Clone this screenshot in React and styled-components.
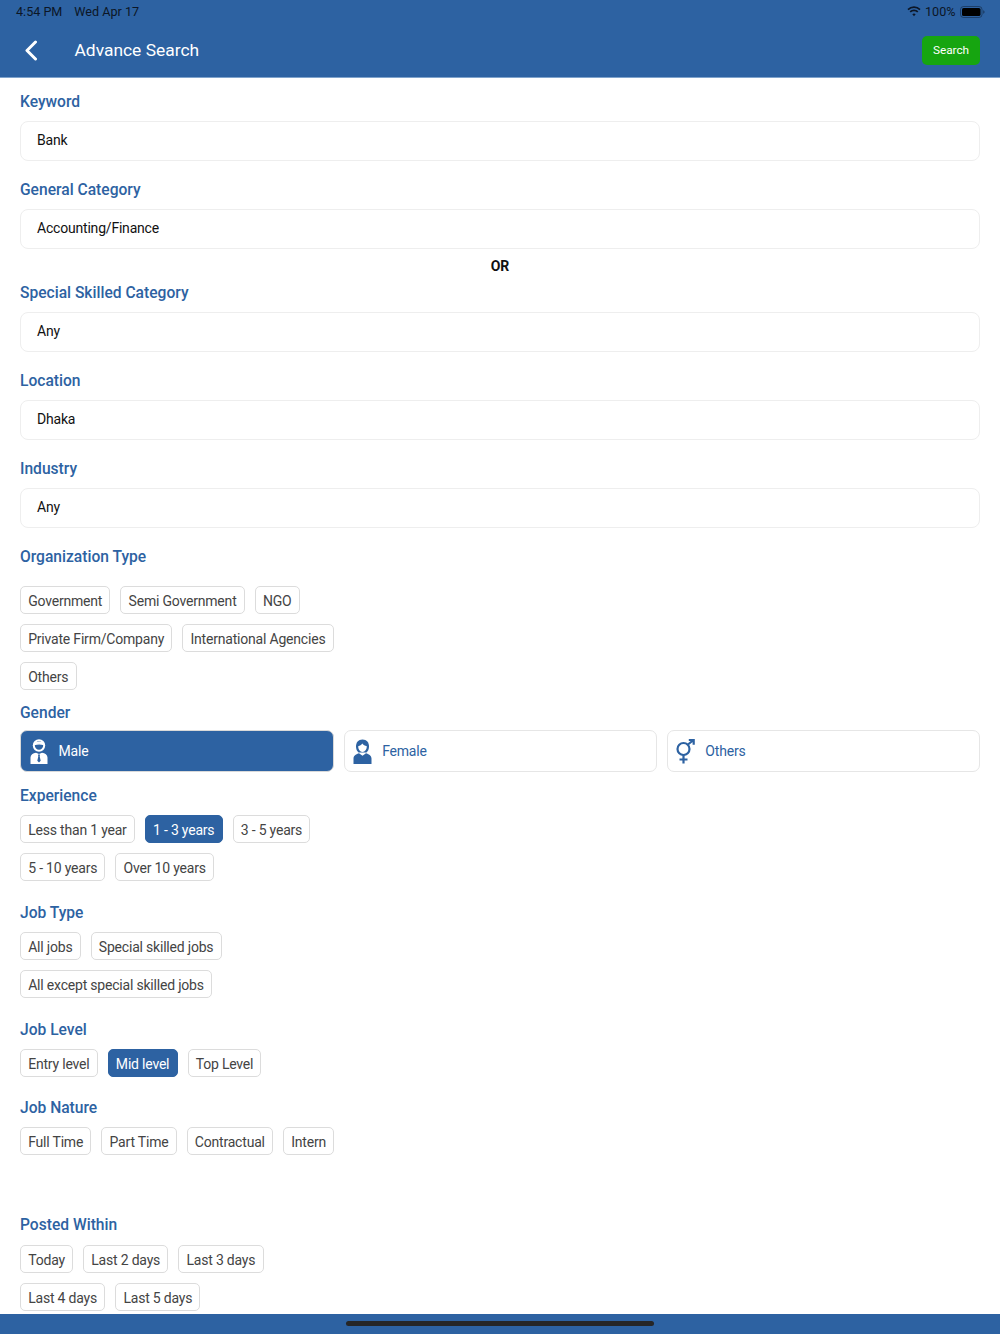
import React from "react";
import styled, { createGlobalStyle } from "styled-components";

const Blue = "#2d62a2";

const Global = createGlobalStyle`
  html, body { margin: 0; padding: 0; background: #fff; }
  body { font-family: Roboto, "Liberation Sans", sans-serif; }
  * { box-sizing: border-box; }
`;

const Page = styled.div`
  width: 1000px;
  height: 1334px;
  display: flex;
  flex-direction: column;
  overflow: hidden;
  background: #fff;
`;

const Header = styled.header`
  height: 78px;
  flex: none;
  background: ${Blue};
  border-bottom: 1px solid #7fa3cc;
  display: flex;
  flex-direction: column;
`;

const StatusBar = styled.div`
  height: 24px;
  padding: 0 15px 1px 16px;
  display: flex;
  align-items: center;
  justify-content: space-between;
  font-size: 12.6px;
  color: #0c1626;
`;

const StatusGroup = styled.div`
  display: flex;
  align-items: center;
  gap: ${(p) => p.$gap || 4.5}px;
`;

const NavBar = styled.div`
  flex: 1;
  padding: 0 20px 1px 25px;
  display: flex;
  align-items: center;
`;

const BackButton = styled.div`
  width: 49.5px;
  display: flex;
  align-items: center;
`;

const Title = styled.h1`
  flex: 1;
  margin: 0;
  font-size: 17.4px;
  font-weight: 400;
  color: #fff;
`;

const SearchButton = styled.button`
  width: 58px;
  height: 29px;
  border: 0;
  border-radius: 5px;
  background: #16a510;
  color: #fff;
  font: 400 11.8px Roboto, sans-serif;
  padding: 0;
`;

const Main = styled.main`
  flex: 1;
  min-height: 0;
  padding: 14px 20px 0;
  display: flex;
  flex-direction: column;
  & > * { flex: none; }
`;

const Label = styled.div`
  height: 20px;
  line-height: 21px;
  font-size: 15.6px;
  font-weight: 500;
  color: ${Blue};
  margin-top: ${(p) => p.$top || 0}px;
  margin-bottom: ${(p) => p.$bottom ?? 9}px;
`;

const Input = styled.div`
  height: 40px;
  padding: 0 16px 2px;
  display: flex;
  align-items: center;
  border: 1.5px solid #eeeeee;
  border-radius: 8px;
  font-size: 14px;
  letter-spacing: -0.2px;
  color: #111;
`;

const Or = styled.div`
  height: 20px;
  line-height: 20px;
  margin: 7px 0 7px;
  text-align: center;
  font-size: 14px;
  font-weight: 700;
  color: #111;
`;

const Chips = styled.div`
  max-width: 325px;
  display: flex;
  flex-wrap: wrap;
  gap: 10px;
`;

const Chip = styled.div`
  height: 28px;
  padding: 1px 7.2px 0;
  display: flex;
  align-items: center;
  border: 1px solid ${(p) => (p.$active ? Blue : "#dcdcdc")};
  border-radius: 5px;
  background: ${(p) => (p.$active ? Blue : "#fff")};
  color: ${(p) => (p.$active ? "#fff" : "#444")};
  font-size: 14px;
  letter-spacing: -0.2px;
  white-space: nowrap;
`;

const GenderRow = styled.div`
  display: flex;
  gap: 10px;
`;

const GenderButton = styled.div`
  flex: 1;
  height: 42px;
  padding-left: ${(p) => p.$pad}px;
  display: flex;
  align-items: center;
  gap: ${(p) => p.$gap}px;
  border: 1.5px solid ${(p) => (p.$active ? "#d9d9d9" : "#e6e6e6")};
  border-radius: 7px;
  background: ${(p) => (p.$active ? Blue : "#fff")};
  color: ${(p) => (p.$active ? "#fff" : Blue)};
  font-size: 14px;
  letter-spacing: -0.2px;
`;

const Footer = styled.footer`
  height: 20px;
  flex: none;
  background: ${Blue};
  display: flex;
  justify-content: center;
  padding-top: 7px;
`;

const HomeBar = styled.div`
  width: 308px;
  height: 5px;
  border-radius: 3px;
  background: #262626;
`;

const Wifi = () => (
  <svg width="14" height="11" viewBox="0 0 14 11" fill="none" stroke="#0c1626" strokeWidth="1.7">
    <path d="M1 3.6a8.6 8.6 0 0 1 12 0" />
    <path d="M3.2 5.9a5.4 5.4 0 0 1 7.6 0" />
    <path d="M7 10.2 5.3 8.2a2.5 2.5 0 0 1 3.4 0z" fill="#0c1626" stroke="none" />
  </svg>
);

const Battery = () => (
  <svg width="25" height="12" viewBox="0 0 25 12">
    <rect x="0.5" y="0.5" width="21.5" height="11" rx="3" fill="none" stroke="#0c1626" strokeOpacity="0.45" />
    <rect x="2" y="2" width="18.5" height="8" rx="1.6" fill="#000" />
    <path d="M23.3 4.2c.8.3 1.2 1 1.2 1.8s-.4 1.5-1.2 1.8z" fill="#0c1626" fillOpacity="0.6" />
  </svg>
);

const BackIcon = () => (
  <svg width="13" height="21" viewBox="0 0 13 21" fill="none" stroke="#fff" strokeWidth="3" strokeLinecap="round" strokeLinejoin="round">
    <path d="M10.5 2 2 10.5 10.5 19" />
  </svg>
);

const MaleIcon = ({ color, cut }) => (
  <svg width="18" height="25" viewBox="0 0 18 25">
    <circle cx="9" cy="6.5" r="5.2" fill="none" stroke={color} strokeWidth="2" />
    <path d="M4 5.6C6 2.6 12 2 14 5.6 11 4.6 7.5 4.6 4 5.6z" fill={color} stroke={color} strokeWidth="1.2" />
    <path d="M0.5 25v-6.5c0-2.6 2.4-4.2 5.5-4.7l3 1.2 3-1.2c3.1.5 5.5 2.1 5.5 4.7V25z" fill={color} />
    <path d="M8 15.4h2l-.3 2 1 4.3L9 23.6l-1.700-1.900 1-4.300z" fill={cut} />
  </svg>
);

const FemaleIcon = ({ color, cut }) => (
  <svg width="19" height="25" viewBox="0 0 19 25">
    <path d="M9.500 0.500c-4.300 0-6.500 3-6.500 6.800 0 2.700.9 4.900 2.500 6.200h8c1.600-1.300 2.500-3.500 2.500-6.200 0-3.800-2.200-6.800-6.500-6.800z" fill={color} />
    <path d="M5.200 7.300c1.800-.3 3.200-1.200 4.100-2.700 1 1.500 2.500 2.400 4.500 2.700 0 3-1.700 5.600-4.300 5.600S5.200 10.300 5.200 7.300z" fill={cut} />
    <path d="M0.500 25v-5.500c0-3 3-4.500 5.500-5.300l3.500 2.500 3.500-2.500c2.500.8 5.500 2.300 5.500 5.300V25z" fill={color} />
  </svg>
);

const OthersIcon = ({ color }) => (
  <svg width="19" height="25" viewBox="0 0 19 25" fill="none" stroke={color} strokeWidth="2.200">
    <circle cx="7.500" cy="10" r="6" />
    <path d="M7.500 16v8.500M3.500 20.500h8" />
    <path d="M12 5.500 17.500 1M12.800 1h4.900v4.700" />
  </svg>
);

const ChipGroup = ({ items, active }) => (
  <Chips>
    {items.map((t) => (
      <Chip key={t} $active={t === active}>{t}</Chip>
    ))}
  </Chips>
);

export default function App() {
  return (
    <Page>
      <Global />
      <Header>
        <StatusBar>
          <StatusGroup $gap={12}>
            <span>4:54 PM</span>
            <span>Wed Apr 17</span>
          </StatusGroup>
          <StatusGroup>
            <Wifi />
            <span>100%</span>
            <Battery />
          </StatusGroup>
        </StatusBar>
        <NavBar>
          <BackButton><BackIcon /></BackButton>
          <Title>Advance Search</Title>
          <SearchButton>Search</SearchButton>
        </NavBar>
      </Header>
      <Main>
        <Label>Keyword</Label>
        <Input>Bank</Input>
        <Label $top={19}>General Category</Label>
        <Input>Accounting/Finance</Input>
        <Or>OR</Or>
        <Label>Special Skilled Category</Label>
        <Input>Any</Input>
        <Label $top={19}>Location</Label>
        <Input>Dhaka</Input>
        <Label $top={19}>Industry</Label>
        <Input>Any</Input>
        <Label $top={19} $bottom={19}>Organization Type</Label>
        <ChipGroup items={["Government", "Semi Government", "NGO", "Private Firm/Company", "International Agencies", "Others"]} />
        <Label $top={13} $bottom={7}>Gender</Label>
        <GenderRow>
          <GenderButton $active $pad={9} $gap={10.5}>
            <MaleIcon color="#fff" cut={Blue} />
            Male
          </GenderButton>
          <GenderButton $pad={8.5} $gap={10}>
            <FemaleIcon color={Blue} cut="#fff" />
            Female
          </GenderButton>
          <GenderButton $pad={8.5} $gap={10}>
            <OthersIcon color={Blue} />
            Others
          </GenderButton>
        </GenderRow>
        <Label $top={14}>Experience</Label>
        <ChipGroup active="1 - 3 years" items={["Less than 1 year", "1 - 3 years", "3 - 5 years", "5 - 10 years", "Over 10 years"]} />
        <Label $top={22}>Job Type</Label>
        <ChipGroup items={["All jobs", "Special skilled jobs", "All except special skilled jobs"]} />
        <Label $top={22}>Job Level</Label>
        <ChipGroup active="Mid level" items={["Entry level", "Mid level", "Top Level"]} />
        <Label $top={21}>Job Nature</Label>
        <ChipGroup items={["Full Time", "Part Time", "Contractual", "Intern"]} />
        <Label $top={60} $bottom={10}>Posted Within</Label>
        <ChipGroup items={["Today", "Last 2 days", "Last 3 days", "Last 4 days", "Last 5 days"]} />
      </Main>
      <Footer><HomeBar /></Footer>
    </Page>
  );
}
